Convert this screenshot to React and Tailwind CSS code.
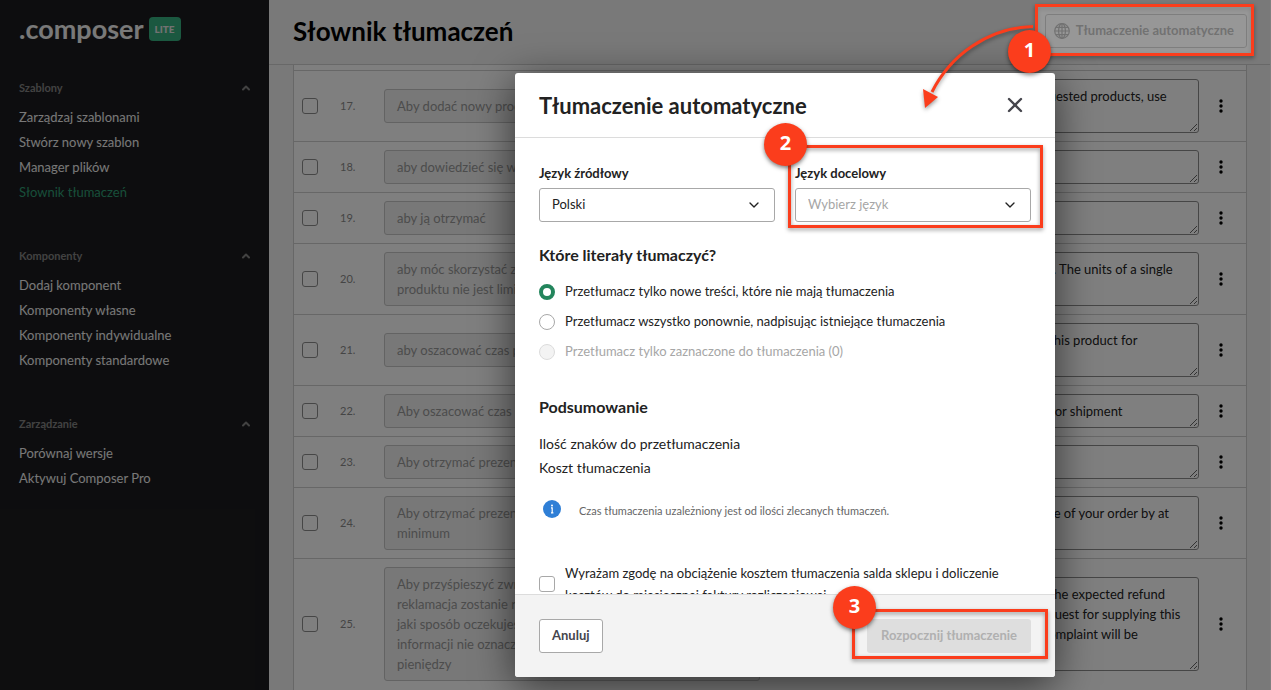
import React, { useState } from "react";
import { ChevronDown, ChevronUp, X } from "lucide-react";

/* ----------------------------- data ----------------------------- */
const sections = [
  {
    title: "Szablony",
    items: ["Zarządzaj szablonami", "Stwórz nowy szablon", "Manager plików", "Słownik tłumaczeń"],
  },
  {
    title: "Komponenty",
    items: ["Dodaj komponent", "Komponenty własne", "Komponenty indywidualne", "Komponenty standardowe"],
  },
  { title: "Zarządzanie", items: ["Porównaj wersje", "Aktywuj Composer Pro"] },
];

const literals = [
  { id: 17, src: ["Aby dodać nowy produkt, użyj"], dst: ["To add another item to that list of requested products, use", "the form"] },
  { id: 18, src: ["aby dowiedzieć się więcej"], dst: ["to find out more"] },
  { id: 19, src: ["aby ją otrzymać"], dst: ["to receive it"] },
  { id: 20, src: ["aby móc skorzystać z rabatu. Ilość sztuk", "produktu nie jest limitowana"], dst: ["to take advantage of the special offers. The units of a single", "product are not limited"] },
  { id: 21, src: ["aby oszacować czas przesyłki"], dst: ["To estimate the total delivery time of this product for", "shipment"] },
  { id: 22, src: ["Aby oszacować czas przesyłki"], dst: ["To estimate how long the order takes for shipment"] },
  { id: 23, src: ["Aby otrzymać prezent"], dst: ["To receive a gift"] },
  { id: 24, src: ["Aby otrzymać prezent, zwiększ zakupy o", "minimum"], dst: ["To receive a free gift, increase the value of your order by at", "least"] },
  {
    id: 25,
    src: ["Aby przyśpieszyć zwrot, w razie gdy", "reklamacja zostanie rozpatrzona, podaj w", "jaki sposób oczekujesz zwrotu. Podanie", "informacji nie oznacza zwrotu", "pieniędzy"],
    dst: ["To speed up the claim process, select the expected refund", "method for a single complaint. The request for supplying this", "data does not always mean that the complaint will be", "accepted"],
  },
];

const options = [
  { id: "new", label: "Przetłumacz tylko nowe treści, które nie mają tłumaczenia" },
  { id: "all", label: "Przetłumacz wszystko ponownie, nadpisując istniejące tłumaczenia" },
  { id: "selected", label: "Przetłumacz tylko zaznaczone do tłumaczenia (0)", disabled: true },
];

/* ----------------------------- icons ----------------------------- */
const GlobeIcon = () => (
  <svg width="16" height="16" viewBox="0 0 16 16" fill="none" stroke="currentColor" strokeWidth="1.2">
    <circle cx="8" cy="8" r="7.3" />
    <ellipse cx="8" cy="8" rx="3.4" ry="7.3" />
    <path d="M8 .7v14.6M.7 8h14.6M1.8 4.3h12.4M1.8 11.7h12.4" />
  </svg>
);

const InfoIcon = () => (
  <svg width="18" height="18" viewBox="0 0 18 18">
    <circle cx="9" cy="9" r="9" fill="#2f7fd6" />
    <circle cx="9" cy="5.6" r="1" fill="#fff" />
    <path d="M8 7.900h1.200v5M8 12.900h2.400" stroke="#fff" strokeWidth="1.200" fill="none" />
  </svg>
);

const DotsIcon = () => (
  <svg width="4" height="14" viewBox="0 0 4 14" fill="currentColor">
    <circle cx="2" cy="2" r="1.7" />
    <circle cx="2" cy="7" r="1.7" />
    <circle cx="2" cy="12" r="1.7" />
  </svg>
);

/* ----------------------------- tour marks ----------------------------- */
const Frame = ({ className }) => (
  <div className={`pointer-events-none absolute border-3 border-[#fb3d1c] drop-shadow-[0_2px_2px_rgba(0,0,0,0.4)] ${className}`} />
);

const Step = ({ n, className }) => (
  <div
    className={`pointer-events-none absolute flex h-[43px] w-[43px] items-center justify-center rounded-full bg-[#fb3d1c] pb-1 font-['Open_Sans',sans-serif] text-xl font-bold text-white shadow-[0_2px_4px_rgba(0,0,0,0.5)] ${className}`}
  >
    {n}
  </div>
);

/* ----------------------------- page ----------------------------- */
const Sidebar = () => (
  <aside className="w-[269px] shrink-0 bg-[#1b1b1e] pr-[17px] pl-[19px]">
    <div className="flex h-[58px] items-center gap-[5px]">
      <span className="text-[27px] font-bold text-[#f2f2f2]">.composer</span>
      <span className="flex h-6 w-8 items-center justify-center rounded-sm bg-[#36b080] text-[10px] font-black text-[#e4e4e4]">LITE</span>
    </div>
    <nav className="mt-[18px] space-y-[39px]">
      {sections.map((s) => (
        <section key={s.title}>
          <h2 className="mb-[5px] flex h-6 items-center justify-between text-[11px] font-bold text-[#858585]">
            {s.title}
            <ChevronUp size={12} strokeWidth={4} />
          </h2>
          <ul>
            {s.items.map((item) => (
              <li key={item} className="h-[25px] leading-[25px]">
                <a href="#" className={item === "Słownik tłumaczeń" ? "text-[#2f9e74]" : "text-[#f0f0f0]"}>{item}</a>
              </li>
            ))}
          </ul>
        </section>
      ))}
    </nav>
  </aside>
);

const Row = ({ row }) => (
  <tr className="border-t border-[#cfcfcf]">
    <td className="pl-2">
      <input
        type="checkbox"
        aria-label={`Zaznacz ${row.id}`}
        className="block h-4 w-4 appearance-none rounded-[3px] border border-[#8c8c8c]"
      />
    </td>
    <td className="text-[11px] text-[#8a8a8a]">{row.id}.</td>
    <td className="py-2 pr-8">
      <textarea
        disabled
        rows={row.src.length}
        aria-label={`Tekst źródłowy ${row.id}`}
        defaultValue={row.src.join("\n")}
        className="block w-full resize-none overflow-hidden rounded-[3px] border border-[#c6c6c6] bg-[#f0f0f0] px-3 py-1.5 leading-5 text-[#999]"
      />
    </td>
    <td className="py-2 pl-8">
      <textarea
        rows={row.dst.length}
        aria-label={`Tłumaczenie ${row.id}`}
        defaultValue={row.dst.join("\n")}
        className="block w-full resize-y overflow-hidden rounded-[3px] border border-[#8c8c8c] px-3 py-1.5 leading-5 whitespace-pre text-[#222]"
      />
    </td>
    <td>
      <button aria-label="Więcej" className="mx-auto flex h-8 w-8 items-center justify-center pr-1 text-black">
        <DotsIcon />
      </button>
    </td>
  </tr>
);

const LanguageSelect = ({ id, label, children, className }) => (
  <div>
    <label htmlFor={id} className="block leading-5 font-bold">{label}</label>
    <div className="relative mt-[5px]">
      <select id={id} className={`block h-[34px] w-full appearance-none rounded-[3px] border border-[#a8a8a8] bg-white px-3 ${className}`}>
        {children}
      </select>
      <ChevronDown size={16} strokeWidth={2} className="pointer-events-none absolute top-[9px] right-[13px] text-[#222]" />
    </div>
  </div>
);

const Modal = () => {
  const [mode, setMode] = useState("new");

  return (
    <div role="dialog" aria-labelledby="dialog-title" className="relative flex max-h-full w-[540px] flex-col rounded-[3px] bg-white text-[#222] shadow-[0_8px_40px_rgba(0,0,0,0.6)]">
      <header className="flex h-[65px] shrink-0 items-center justify-between border-b border-[#dcdcdc] px-6">
        <h2 id="dialog-title" className="text-[22px] font-bold">Tłumaczenie automatyczne</h2>
        <button aria-label="Zamknij" className="flex h-8 w-8 items-center justify-center text-[#45454c]">
          <X size={24} strokeWidth={2.4} />
        </button>
      </header>

      <div className="min-h-0 overflow-hidden px-6 pt-[25px] pb-6">
        <div className="grid grid-cols-2 gap-5">
          <LanguageSelect id="source" label="Język źródłowy">
            <option>Polski</option>
          </LanguageSelect>
          <LanguageSelect id="target" label="Język docelowy" className="text-[#a6a6a6]">
            <option>Wybierz język</option>
          </LanguageSelect>
        </div>

        <fieldset className="mt-[21px]">
          <legend className="mb-[15px] text-base font-bold">Które literały tłumaczyć?</legend>
          <div className="space-y-2.5">
            {options.map((o) => (
              <label key={o.id} className={`flex h-5 items-center gap-2.5 ${o.disabled ? "text-[#a6a6a6]" : ""}`}>
                <input
                  type="radio"
                  name="mode"
                  checked={mode === o.id}
                  disabled={o.disabled}
                  onChange={() => setMode(o.id)}
                  className="h-4 w-4 appearance-none rounded-full border border-[#a8a8a8] bg-white checked:border-4 checked:border-[#23855c] disabled:border-[#dcdcdc] disabled:bg-[#f3f3f3]"
                />
                {o.label}
              </label>
            ))}
          </div>
        </fieldset>

        <h3 className="mt-[33px] text-base font-bold">Podsumowanie</h3>
        <div className="mt-[13px] text-sm leading-6">
          <p>Ilość znaków do przetłumaczenia</p>
          <p>Koszt tłumaczenia</p>
        </div>
        <div className="mt-5 flex h-[18px] items-center gap-[18px] pl-1 text-[11px] text-[#666]">
          <InfoIcon />
          <p className="pt-1">Czas tłumaczenia uzależniony jest od ilości zlecanych tłumaczeń.</p>
        </div>

        <label className="mt-11 flex items-center gap-2.5 leading-[22px]">
          <input type="checkbox" className="h-4 w-4 shrink-0 appearance-none rounded-[3px] border border-[#a8a8a8] bg-white" />
          <span>Wyrażam zgodę na obciążenie kosztem tłumaczenia salda sklepu i doliczenie kosztów do miesięcznej faktury rozliczeniowej</span>
        </label>
      </div>

      <footer className="flex h-[83px] shrink-0 items-center justify-between rounded-b-[3px] border-t border-[#dcdcdc] bg-[#f3f3f3] px-6">
        <button className="h-[34px] rounded-[3px] border border-[#a8a8a8] bg-white px-3 font-bold text-[#45454c]">Anuluj</button>
        <button disabled className="h-[34px] rounded-[3px] bg-[#dedede] px-3.5 font-bold text-[#b0b0b0]">Rozpocznij tłumaczenie</button>
      </footer>

      <Frame className="top-[72px] left-[273px] h-[83px] w-[255px]" />
      <Step n={2} className="top-[50px] left-[249px]" />
      <Frame className="right-[7px] bottom-[18px] h-[50px] w-[196px]" />
      <Step n={3} className="right-[179px] bottom-12" />
    </div>
  );
};

const App = () => (
  <div className="relative flex h-screen overflow-hidden bg-[#f3f3f3] font-[Lato,sans-serif] text-[13px]">
    <Sidebar />

    <main className="flex min-w-0 flex-1 flex-col border-r border-white">
      <header className="flex h-[65px] shrink-0 items-center justify-between border-b border-[#d0d0d0] pr-[23px] pb-0.5 pl-6">
        <h1 className="text-[26px] font-bold text-black">Słownik tłumaczeń</h1>
        <button disabled className="flex h-[34px] items-center gap-1.5 rounded-[3px] border border-[#a3a3a3] pr-3 pl-2 font-bold text-[#787878]">
          <GlobeIcon />
          Tłumaczenie automatyczne
        </button>
      </header>

      <div className="mr-[23px] ml-6 min-h-0 flex-1 overflow-hidden border-x border-[#cfcfcf] bg-white pt-[5px]">
        <table className="w-full table-fixed border-collapse">
          <colgroup>
            <col className="w-[46px]" />
            <col className="w-11" />
            <col />
            <col />
            <col className="w-[47px]" />
          </colgroup>
          <tbody>
            {literals.map((row) => <Row key={row.id} row={row} />)}
          </tbody>
        </table>
      </div>
    </main>

    <div className="absolute inset-0 flex items-start justify-center bg-black/50 pt-[73px] pb-[13px] pl-[299px]">
      <Modal />
    </div>

    <Frame className="top-1 right-[17px] h-[52px] w-[219px] bg-white/30" />
    <svg className="pointer-events-none absolute top-5 right-[231px] drop-shadow-[0_2px_2px_rgba(0,0,0,0.4)]" width="125" height="95" viewBox="0 0 125 95">
      <path d="M118 6.500C72 8 35 36 17 72" fill="none" stroke="#fb3d1c" strokeWidth="3" />
      <path d="M8 69l15 8-13 11z" fill="#fb3d1c" />
    </svg>
    <Step n={1} className="top-[30px] right-[220px]" />
  </div>
);

export default App;
